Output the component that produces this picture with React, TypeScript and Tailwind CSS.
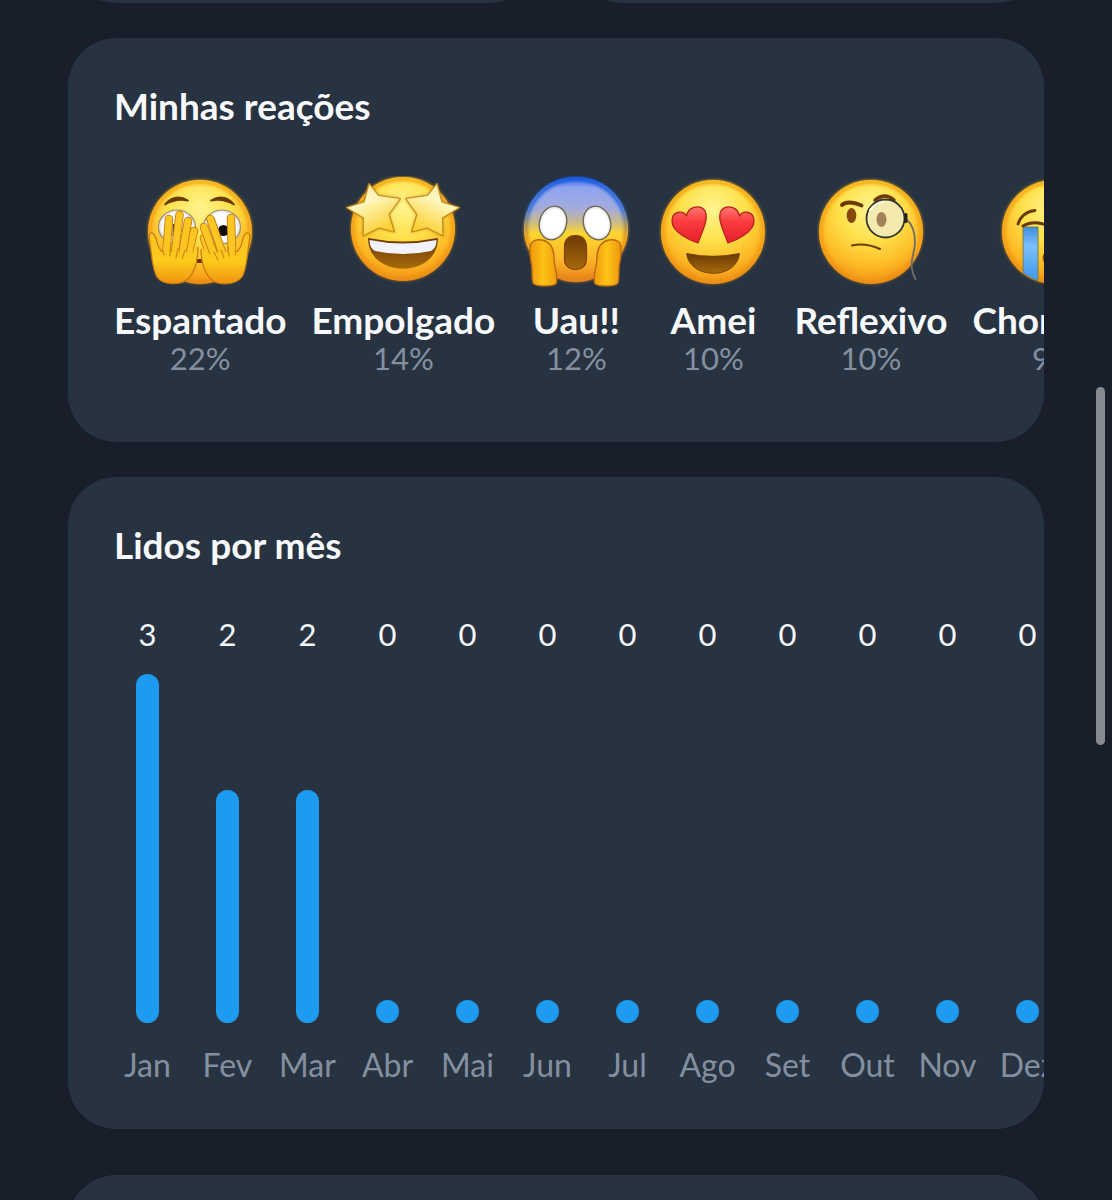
import type { ReactNode } from "react";

const INK = "#6b3a06";

const Defs = () => (
  <svg className="absolute h-0 w-0" aria-hidden="true">
    <defs>
      <radialGradient id="face" cx="50%" cy="28%" r="74%">
        <stop offset="0" stopColor="#fff48e" />
        <stop offset="0.42" stopColor="#fee04a" />
        <stop offset="0.75" stopColor="#fdb924" />
        <stop offset="1" stopColor="#ee8a12" />
      </radialGradient>
      <linearGradient id="rim" x1="0" y1="0" x2="0" y2="1">
        <stop offset="0" stopColor="#f5ab12" />
        <stop offset="0.5" stopColor="#f39a12" stopOpacity="0.8" />
        <stop offset="1" stopColor="#e88a10" stopOpacity="0.6" />
      </linearGradient>
      <linearGradient id="scared" x1="0" y1="0" x2="0" y2="1">
        <stop offset="0" stopColor="#2a62e8" />
        <stop offset="0.1" stopColor="#8fa4f0" />
        <stop offset="0.3" stopColor="#a3abdc" />
        <stop offset="0.42" stopColor="#c5b893" />
        <stop offset="0.54" stopColor="#fdd62f" />
        <stop offset="0.78" stopColor="#fdb62a" />
        <stop offset="1" stopColor="#e98018" />
      </linearGradient>
      <linearGradient id="scaredRim" x1="0" y1="0" x2="0" y2="1">
        <stop offset="0" stopColor="#1257e0" />
        <stop offset="0.3" stopColor="#2e72dc" />
        <stop offset="0.46" stopColor="#a58c55" />
        <stop offset="0.6" stopColor="#f19a18" />
        <stop offset="1" stopColor="#e5841a" />
      </linearGradient>
      <linearGradient id="hand" x1="0" y1="0" x2="0" y2="1">
        <stop offset="0" stopColor="#fdc423" />
        <stop offset="0.55" stopColor="#fdca1c" />
        <stop offset="1" stopColor="#f0930f" />
      </linearGradient>
      <linearGradient id="cheekHand" x1="0" y1="0" x2="1" y2="0">
        <stop offset="0" stopColor="#ee9410" />
        <stop offset="0.5" stopColor="#fdc414" />
        <stop offset="1" stopColor="#f09a10" />
      </linearGradient>
      <linearGradient id="star" x1="0" y1="0" x2="0.5" y2="1">
        <stop offset="0" stopColor="#fdd978" />
        <stop offset="0.4" stopColor="#fff8c4" />
        <stop offset="1" stopColor="#fbd02e" />
      </linearGradient>
      <linearGradient id="heart" x1="0" y1="0" x2="0" y2="1">
        <stop offset="0" stopColor="#ff7774" />
        <stop offset="0.4" stopColor="#fa3c40" />
        <stop offset="1" stopColor="#e3202c" />
      </linearGradient>
      <linearGradient id="mouth" x1="0" y1="0" x2="0" y2="1">
        <stop offset="0" stopColor="#6b3a06" />
        <stop offset="1" stopColor="#a86a0a" />
      </linearGradient>
      <radialGradient id="eyeWhite">
        <stop offset="0.8" stopColor="#ffffff" />
        <stop offset="1" stopColor="#d5d8e0" />
      </radialGradient>
      <linearGradient id="tear" x1="0" y1="0" x2="0" y2="1">
        <stop offset="0" stopColor="#3d8de0" />
        <stop offset="0.35" stopColor="#7cc0fa" />
        <stop offset="1" stopColor="#3f97ec" />
      </linearGradient>
      <filter id="soft" x="-20%" y="-20%" width="140%" height="140%">
        <feGaussianBlur stdDeviation="1.6" />
      </filter>
    </defs>
  </svg>
);

const Emoji = ({ children }: { children: ReactNode }) => (
  <svg viewBox="0 0 112 112" className="h-28 w-28 overflow-visible" aria-hidden="true">
    {children}
  </svg>
);

const Face = ({ cy = 56 }: { cy?: number }) => (
  <>
    <circle cx="56" cy={cy} r="52" fill="url(#face)" />
    <circle cx="56" cy={cy} r="50" fill="none" stroke="url(#rim)" strokeWidth="4" filter="url(#soft)" />
  </>
);

const leftFingers = ["M50 55L43 84", "M44 45L37 84", "M25 43L22 80", "M35.500 39L30 84"];
const rightFingers = ["M60 62L68 86", "M60 51L72 84", "M87 42L88 80", "M66.500 43L80 82"];

const Fingers = ({ paths }: { paths: string[] }) => (
  <g fill="none" strokeLinecap="round">
    {paths.map((d) => (
      <g key={d}>
        <path d={d} stroke="#c27a0e" strokeWidth="8.500" />
        <path d={d} stroke="#fdc622" strokeWidth="6.800" />
      </g>
    ))}
  </g>
);

const Peeking = () => (
  <Emoji>
    <Face />
    <path d="M21 28.500Q31 17 44 24.500Q32 22 21 28.500ZM67 24.500Q80 17 90 28.500Q79 22 67 24.500Z" fill={INK} stroke={INK} strokeWidth="1.800" strokeLinejoin="round" />
    <ellipse cx="33" cy="51" rx="18.500" ry="17" fill="url(#eyeWhite)" stroke="#a59060" strokeWidth="1.200" />
    <ellipse cx="78" cy="51" rx="18.500" ry="17" fill="url(#eyeWhite)" stroke="#a59060" strokeWidth="1.200" />
    <path d="M29.500 48v12" stroke="#5c4a30" strokeWidth="2" />
    <circle cx="79.500" cy="54.500" r="5.500" fill="#130d08" />
    <path d="M47 83H63V87H47Z" fill="#6b2f04" />
    <Fingers paths={leftFingers} />
    <path d="M5 61C6 54 11 55 14 70L18 76C26 76 40 75 48 77C51 73 53 67 54 71C54 84 51 96 44 103C36 110 18 109 13 101C7 91 8 75 5 61Z" fill="url(#hand)" />
    <path d="M18 76L14 70C11 55 6 54 5 61C8 75 7 91 13 101C18 109 36 110 44 103C51 96 54 84 54 71" fill="none" stroke="#c27a0e" strokeWidth="1.200" />
    <path d="M26.500 70L26 80M34 72L32 82M41 74L38 83M19 75L20 79" stroke="#d08a10" strokeWidth="1.200" strokeLinecap="round" />
    <Fingers paths={rightFingers} />
    <path d="M106 61C105 54 100 55 97 70L93 76C85 76 72 75 64 79C61 75 58 69 57 73C57 86 60 97 68 104C75 110 92 109 98 101C104 91 103 75 106 61Z" fill="url(#hand)" />
    <path d="M93 76L97 70C100 55 105 54 106 61C103 75 104 91 98 101C92 109 75 110 68 104C60 97 57 86 57 73" fill="none" stroke="#c27a0e" strokeWidth="1.200" />
    <path d="M84 71L85 80M77 74L80 82M70 76L74 84M92 75L91 79" stroke="#d08a10" strokeWidth="1.200" strokeLinecap="round" />
  </Emoji>
);

const STAR = "M22 7.500L31.500 19.500L53.500 22.500L42 38.500L47.500 56L32 52L16 60L16.500 42L-0.700 31.500L17 26Z";

const StarStruck = () => (
  <Emoji>
    <Face cy={53} />
    <path d="M21 62Q55.500 69 91 62C91 103 21 103 21 62Z" fill="url(#mouth)" />
    <path d="M22.500 64Q55.500 71 89.500 64Q89.500 72 84 75Q56 81 28 75Q22.500 72 22.500 64Z" fill="#f2f2fa" />
    <path d={STAR} fill="#a8690c" filter="url(#soft)" />
    <path d={STAR} fill="url(#star)" stroke="#c98a1c" strokeWidth="1.200" strokeLinejoin="round" />
    <g transform="matrix(-1 0 0 1 112 0)">
      <path d={STAR} fill="#a8690c" filter="url(#soft)" />
      <path d={STAR} fill="url(#star)" stroke="#c98a1c" strokeWidth="1.200" strokeLinejoin="round" />
    </g>
  </Emoji>
);

const CHEEK_HAND = "M10 72C10 65 16 63 22 64C31 66 34 74 34 82C34 90 38 98 36.500 107C35 111 15 111 13 107C11 100 13 93 11 86C10 80 9.500 76 10 72Z";

const Screaming = () => (
  <Emoji>
    <path d="M56 1C85 1 108 24 108 53C108 70 99 84 86 95C76 103 66 106 56 106C46 106 36 103 26 95C13 84 4 70 4 53C4 24 27 1 56 1Z" fill="url(#scared)" />
    <path d="M56 3C84 3 106 25 106 53C106 69 98 83 85 93C76 101 66 104 56 104C46 104 36 101 27 93C14 83 6 69 6 53C6 25 28 3 56 3Z" fill="none" stroke="url(#scaredRim)" strokeWidth="4" filter="url(#soft)" />
    <ellipse cx="33" cy="47" rx="13.500" ry="17" fill="url(#eyeWhite)" stroke="#69664d" strokeWidth="1.300" transform="rotate(16 33 47)" />
    <ellipse cx="77" cy="47" rx="13.500" ry="17" fill="url(#eyeWhite)" stroke="#69664d" strokeWidth="1.300" transform="rotate(-16 77 47)" />
    <rect x="44.500" y="59.500" width="22" height="34" rx="10" fill="url(#mouth)" stroke="#7b4208" strokeWidth="1.200" />
    <path d={CHEEK_HAND} fill="url(#cheekHand)" stroke="#b5690c" strokeWidth="1.300" />
    <path d={CHEEK_HAND} fill="url(#cheekHand)" stroke="#b5690c" strokeWidth="1.300" transform="matrix(-1 0 0 1 111 0)" />
  </Emoji>
);

const HEART = "M41 67C32 64 15 56 15 45C15 35 26 34 29.500 40C31 31 42 28 47.500 34C53 42 44 58 41 67Z";

const HeartEyes = () => (
  <Emoji>
    <Face />
    <path d={HEART} fill="url(#heart)" stroke="#b8201c" strokeWidth="1.300" strokeLinejoin="round" />
    <path d={HEART} fill="url(#heart)" stroke="#b8201c" strokeWidth="1.300" strokeLinejoin="round" transform="matrix(-1 0 0 1 112 0)" />
    <path d="M29.500 77.500Q56 83 82.500 77.500C80 104 33 104 29.500 77.500Z" fill="url(#mouth)" stroke="#6b3a06" strokeWidth="0.800" />
  </Emoji>
);

const Monocle = () => (
  <Emoji>
    <Face />
    <path d="M27 29Q33 24 46.500 29.500" fill="none" stroke={INK} strokeWidth="4" strokeLinecap="round" />
    <path d="M60 24Q70 16 79 24" fill="none" stroke={INK} strokeWidth="3.500" strokeLinecap="round" />
    <ellipse cx="36.500" cy="39.500" rx="4.800" ry="7.500" fill="#85480a" />
    <circle cx="70.500" cy="42.500" r="19" fill="#f3eab8" fillOpacity="0.9" stroke="#33342d" strokeWidth="1.800" />
    <ellipse cx="66.500" cy="43.500" rx="5" ry="7.500" fill="#a28358" />
    <path d="M55 34Q60 27 68 26" fill="none" stroke="#fffbe5" strokeWidth="2" strokeLinecap="round" />
    <path d="M37 69.500C45 67.500 56 69 65 73" fill="none" stroke={INK} strokeWidth="2" strokeLinecap="round" />
    <path d="M91 43C97 48 100 57 100 66C100 76 95 84 97 93Q98 99 100.500 103" fill="none" stroke="#6f6d6b" strokeWidth="1.800" strokeLinecap="round" />
    <rect x="89" y="37" width="3.500" height="10" rx="1.500" fill="#26241f" />
  </Emoji>
);

const Crying = () => (
  <Emoji>
    <Face />
    <path d="M20 48Q24 36 37 34.500M92 48Q88 36 75 34.500" fill="none" stroke={INK} strokeWidth="2.800" strokeLinecap="round" />
    <path d="M25 51H40V105Q32 102 25 97ZM72 51H87V97Q80 102 72 105Z" fill="url(#tear)" stroke="#7e7f4d" strokeWidth="1" />
    <path d="M25 50Q35 44 48 49M64 49Q77 44 87 50" fill="none" stroke={INK} strokeWidth="3" strokeLinecap="round" />
    <ellipse cx="56" cy="82" rx="11.500" ry="9" fill="url(#mouth)" />
  </Emoji>
);

const reactions = [
  { label: "Espantado", percent: 22, icon: <Peeking /> },
  { label: "Empolgado", percent: 14, icon: <StarStruck /> },
  { label: "Uau!!", percent: 12, icon: <Screaming /> },
  { label: "Amei", percent: 10, icon: <HeartEyes /> },
  { label: "Reflexivo", percent: 10, icon: <Monocle /> },
  { label: "Chorando", percent: 9, icon: <Crying /> },
];

const months = [
  { name: "Jan", total: 3 },
  { name: "Fev", total: 2 },
  { name: "Mar", total: 2 },
  { name: "Abr", total: 0 },
  { name: "Mai", total: 0 },
  { name: "Jun", total: 0 },
  { name: "Jul", total: 0 },
  { name: "Ago", total: 0 },
  { name: "Set", total: 0 },
  { name: "Out", total: 0 },
  { name: "Nov", total: 0 },
  { name: "Dez", total: 0 },
];

const maxTotal = Math.max(...months.map((month) => month.total));

const Card = ({ title, children }: { title: string; children: ReactNode }) => (
  <section className="shrink-0 overflow-hidden rounded-[48px] bg-[#283341] pt-[46px] pl-[46px]">
    <h2 className="text-[37px] leading-[44px] font-bold">{title}</h2>
    {children}
  </section>
);

const App = () => {
  return (
    <div className="relative h-screen overflow-hidden bg-[#181f2a] font-['Lato',sans-serif] text-[#f7f9fc]">
      <Defs />
      <main className="flex h-full flex-col px-[68px]">
        <div className="flex h-[3px] shrink-0 items-end gap-9 overflow-hidden">
          <div className="h-24 flex-1 rounded-[48px] bg-[#283341]" />
          <div className="h-24 flex-1 rounded-[48px] bg-[#283341]" />
        </div>

        <div className="mt-[35px] flex shrink-0 flex-col gap-[35px]">
          <Card title="Minhas reações">
            <ul className="mt-12 flex gap-[25px] overflow-hidden pb-[68px]">
              {reactions.map((reaction) => (
                <li key={reaction.label} className="flex min-w-28 shrink-0 flex-col items-center">
                  {reaction.icon}
                  <span className="mt-[10px] text-[37px] leading-[44px] font-bold">{reaction.label}</span>
                  <span className="text-[31px] leading-[32px] text-[#8490a0]">{reaction.percent}%</span>
                </li>
              ))}
            </ul>
          </Card>

          <Card title="Lidos por mês">
            <ul className="mt-12 flex gap-[13px] overflow-hidden pb-[45px]">
              {months.map((month) => (
                <li key={month.name} className="flex w-[67px] shrink-0 flex-col items-center leading-[38px]">
                  <span className="text-[31px]">{month.total}</span>
                  <div className="mt-[21px] mb-[23px] flex h-[349px] items-end">
                    <div
                      className="min-h-[23px] w-[23px] rounded-full bg-[#1d9bf0]"
                      style={{ height: `${(month.total / maxTotal) * 100}%` }}
                    />
                  </div>
                  <span className="text-[32px] text-[#8490a0]">{month.name}</span>
                </li>
              ))}
            </ul>
          </Card>
        </div>

        <div className="mt-[46px] h-96 shrink-0 rounded-[48px] bg-[#283341]" />
      </main>
      <div className="absolute top-[387px] right-[7px] h-[358px] w-[9px] rounded-full bg-[#868b92]" />
    </div>
  );
};

export default App;
